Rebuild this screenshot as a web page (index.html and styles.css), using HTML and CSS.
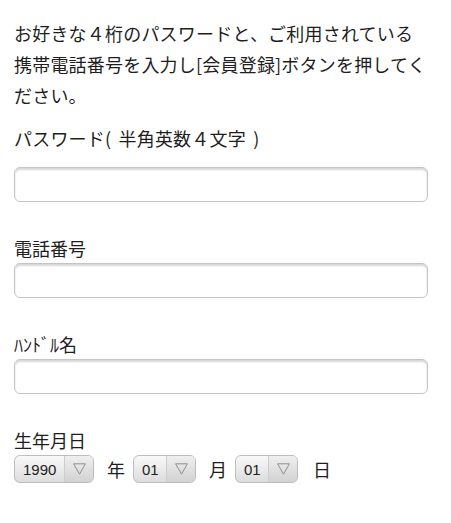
FILE: index.html
```html
<!DOCTYPE html>
<html lang="ja">
<head>
<meta charset="utf-8">
<title>会員登録</title>
<link rel="stylesheet" href="styles.css">
</head>
<body>
<form class="page">
  <p class="intro">お好きな４桁のパスワードと、ご利用されている携帯電話番号を入力し[会員登録]ボタンを押してください。</p>

  <div class="field field-first">
    <label class="label label-pass" for="pw">パスワード( 半角英数４文字 )</label>
    <input class="text-input" id="pw" type="text">
  </div>

  <div class="field">
    <label class="label" for="tel">電話番号</label>
    <input class="text-input" id="tel" type="text">
  </div>

  <div class="field">
    <label class="label" for="nick">ﾊﾝﾄﾞﾙ名</label>
    <input class="text-input" id="nick" type="text">
  </div>

  <div class="field">
    <span class="label">生年月日</span>
    <div class="birth">
      <span class="select select-year">
        <select class="select-value">
          <option>1990</option>
          <option>1991</option>
        </select>
        <span class="select-arrow"><svg width="13" height="12" viewBox="0 0 13 12"><path d="M0.6 0.8 H12.4 L6.5 11.2 Z" fill="none" stroke="#8f8f8f" stroke-width="1" stroke-linejoin="miter"/></svg></span>
      </span>
      <span class="unit">年</span>
      <span class="select select-short">
        <select class="select-value">
          <option>01</option>
          <option>02</option>
        </select>
        <span class="select-arrow"><svg width="13" height="12" viewBox="0 0 13 12"><path d="M0.6 0.8 H12.4 L6.5 11.2 Z" fill="none" stroke="#8f8f8f" stroke-width="1" stroke-linejoin="miter"/></svg></span>
      </span>
      <span class="unit">月</span>
      <span class="select select-short">
        <select class="select-value">
          <option>01</option>
          <option>02</option>
        </select>
        <span class="select-arrow"><svg width="13" height="12" viewBox="0 0 13 12"><path d="M0.6 0.8 H12.4 L6.5 11.2 Z" fill="none" stroke="#8f8f8f" stroke-width="1" stroke-linejoin="miter"/></svg></span>
      </span>
      <span class="unit unit-last">日</span>
    </div>
  </div>
</form>
</body>
</html>
```

FILE: styles.css
```css
html, body {
  margin: 0;
  padding: 0;
  background: #ffffff;
}

body {
  font-family: "Noto Sans CJK JP", "Noto Sans", sans-serif;
  font-size: 18px;
  color: #1e1e1e;
}

.page {
  padding: 18px 23px 0 14px;
}

.intro {
  margin: 0;
  line-height: 31px;
  letter-spacing: 0.2px;
}

.field {
  margin-top: 34px;
}

.field-first {
  margin-top: 15px;
}

.label {
  display: block;
  line-height: 24px;
  margin-bottom: 3px;
}

.label-pass {
  margin-bottom: 17px;
  word-spacing: 3px;
  letter-spacing: 0.2px;
}

.text-input {
  display: block;
  box-sizing: border-box;
  width: 100%;
  height: 35px;
  margin: 0;
  padding: 0 8px;
  border: 1px solid #c4c4c4;
  border-radius: 6px;
  background: #ffffff;
  box-shadow: inset 0 2px 2px rgba(0, 0, 0, 0.16);
  font-family: "Liberation Sans", sans-serif;
  font-size: 16px;
  outline: none;
}

.birth {
  display: flex;
  align-items: center;
}

.select {
  display: inline-flex;
  box-sizing: border-box;
  height: 28px;
  border: 1px solid #bdbdbd;
  border-radius: 6px;
  overflow: hidden;
  background: linear-gradient(#f9f9f9, #dcdcdc);
  box-shadow: 0 1px 0 rgba(0, 0, 0, 0.04);
}

.select-value {
  -webkit-appearance: none;
  appearance: none;
  border: none;
  margin: 0;
  padding: 0 0 0 8px;
  height: 100%;
  background: transparent;
  font-family: "Liberation Sans", Arial, sans-serif;
  font-size: 15px;
  color: #1e1e1e;
  outline: none;
}

.select-year .select-value {
  width: 49px;
}

.select-short .select-value {
  width: 32px;
}

.select-arrow {
  display: flex;
  align-items: center;
  justify-content: center;
  width: 28px;
  border-left: 1px solid #cdcdcd;
  background: linear-gradient(#efefef, #d2d2d2);
}

.unit {
  line-height: 24px;
  margin: 0 8px 0 13px;
}

.unit-last {
  margin-left: 15px;
}
```
